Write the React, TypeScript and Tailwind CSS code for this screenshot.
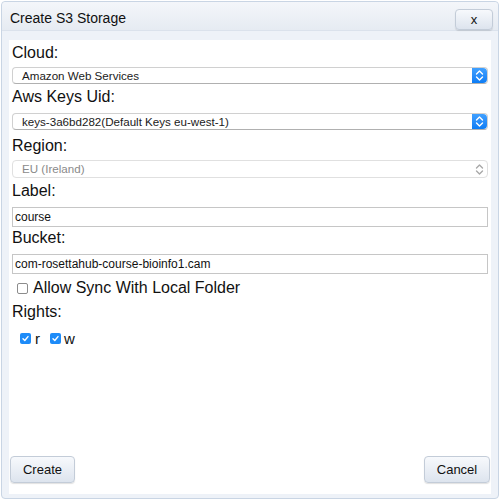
import React from "react";

const font = { fontFamily: '"Liberation Sans", Arial, sans-serif' };

const Stepper: React.FC<{ disabled?: boolean }> = ({ disabled }) => (
  <div
    className={
      disabled
        ? "flex h-full w-[15px] items-center justify-center"
        : "flex h-full w-[15px] items-center justify-center rounded-r-[4px] bg-gradient-to-b from-[#3fa0ff] to-[#0a7cf5]"
    }
  >
    <svg width="9" height="13" viewBox="0 0 9 13" fill="none">
      <path
        d="M1.5 5 L4.5 2 L7.5 5 M1.5 8 L4.5 11 L7.5 8"
        stroke={disabled ? "#a8a8a8" : "#ffffff"}
        strokeWidth="1.4"
        strokeLinecap="round"
        strokeLinejoin="round"
      />
    </svg>
  </div>
);

const Select: React.FC<{ value: string; disabled?: boolean; h: string }> = ({
  value,
  disabled,
  h,
}) => (
  <div
    className={`flex ${h} items-center justify-between rounded-[4px] border ${
      disabled
        ? "border-[#e0e0e0] text-[#8a8a8a]"
        : "border-[#d0d0d0] border-b-[#b0b0b0] text-[#1a1a1a]"
    } bg-white pl-[9px] text-[11.6px]`}
  >
    <span className="leading-none">{value}</span>
    <Stepper disabled={disabled} />
  </div>
);

const Label: React.FC<{ text: string; className?: string }> = ({
  text,
  className,
}) => (
  <div className={`h-[18px] text-[16px] leading-[18px] text-[#111] ${className}`}>
    {text}
  </div>
);

const Input: React.FC<{ value: string; className?: string }> = ({
  value,
  className,
}) => (
  <div
    className={`flex h-[20px] items-center border border-[#c6c6c6] bg-white pl-[2px] text-[12px] text-[#111] ${className}`}
  >
    {value}
  </div>
);

const Check: React.FC<{ checked?: boolean }> = ({ checked }) =>
  checked ? (
    <div className="flex h-[11px] w-[11px] items-center justify-center rounded-[2px] bg-[#1d8bf8]">
      <svg width="9" height="9" viewBox="0 0 9 9" fill="none">
        <path
          d="M2 4.8 L3.8 6.5 L7 2.6"
          stroke="#fff"
          strokeWidth="1.4"
          strokeLinecap="round"
          strokeLinejoin="round"
        />
      </svg>
    </div>
  ) : (
    <div className="h-[11px] w-[11px] rounded-[2px] border border-[#8c8c8c] bg-white" />
  );

const Button: React.FC<{ text: string; className?: string }> = ({
  text,
  className,
}) => (
  <div
    className={`flex items-center justify-center rounded-[4px] border border-[#c3ccd8] bg-gradient-to-b from-[#f7f9fc] to-[#dde4ee] text-[13px] text-[#111] shadow-[0_1px_1px_rgba(0,0,0,0.12)] ${className}`}
  >
    {text}
  </div>
);

export default function App() {
  return (
    <div className="h-[501px] w-[501px] bg-white" style={font}>
      <div className="ml-[1px] mt-[1px] flex h-[498px] w-[498px] flex-col rounded-[4px] border border-[#c9d5e4] bg-[#eef2f8]">
        {/* title bar */}
        <div className="flex h-[29px] shrink-0 items-center justify-between rounded-t-[4px] border-b border-[#dbe2ec] bg-gradient-to-b from-[#f4f6fa] to-[#e6ebf2] pl-[8px] pr-[5px]">
          <span className="mt-[4px] text-[14px] text-[#111]">Create S3 Storage</span>
          <Button text="x" className="mt-[7px] h-[21px] w-[38px]" />
        </div>

        {/* body */}
        <div className="mx-[7px] mb-[4px] mt-[9px] flex flex-1 flex-col bg-white px-[3px] pt-[4px]">
          <Label text="Cloud:" />
          <div className="mt-[5px]">
            <Select value="Amazon Web Services" h="h-[17px]" />
          </div>

          <Label text="Aws Keys Uid:" className="mt-[4px]" />
          <div className="mt-[7px]">
            <Select value="keys-3a6bd282(Default Keys eu-west-1)" h="h-[17px]" />
          </div>

          <Label text="Region:" className="mt-[7px]" />
          <div className="mt-[5px]">
            <Select value="EU (Ireland)" h="h-[18px]" disabled />
          </div>

          <Label text="Label:" className="mt-[4px]" />
          <Input value="course" className="mt-[7px]" />

          <Label text="Bucket:" className="mt-[2px]" />
          <Input value="com-rosettahub-course-bioinfo1.cam" className="mt-[7px]" />

          <div className="mt-[5px] flex h-[18px] items-center pl-[5px]">
            <Check />
            <span className="ml-[5px] text-[16px] leading-[18px] text-[#111]">
              Allow Sync With Local Folder
            </span>
          </div>

          <Label text="Rights:" className="mt-[6px]" />

          <div className="mt-[10px] flex h-[14px] items-center pl-[8px] text-[15px] text-[#111]">
            <Check checked />
            <span className="ml-[4px] leading-none">r</span>
            <span className="ml-[10px]">
              <Check checked />
            </span>
            <span className="ml-[3px] leading-none">w</span>
          </div>

          <div className="mt-auto -mx-[2px] mb-[11px] flex justify-between">
            <Button text="Create" className="h-[27px] w-[65px]" />
            <Button text="Cancel" className="h-[27px] w-[66px]" />
          </div>
        </div>
      </div>
    </div>
  );
}
